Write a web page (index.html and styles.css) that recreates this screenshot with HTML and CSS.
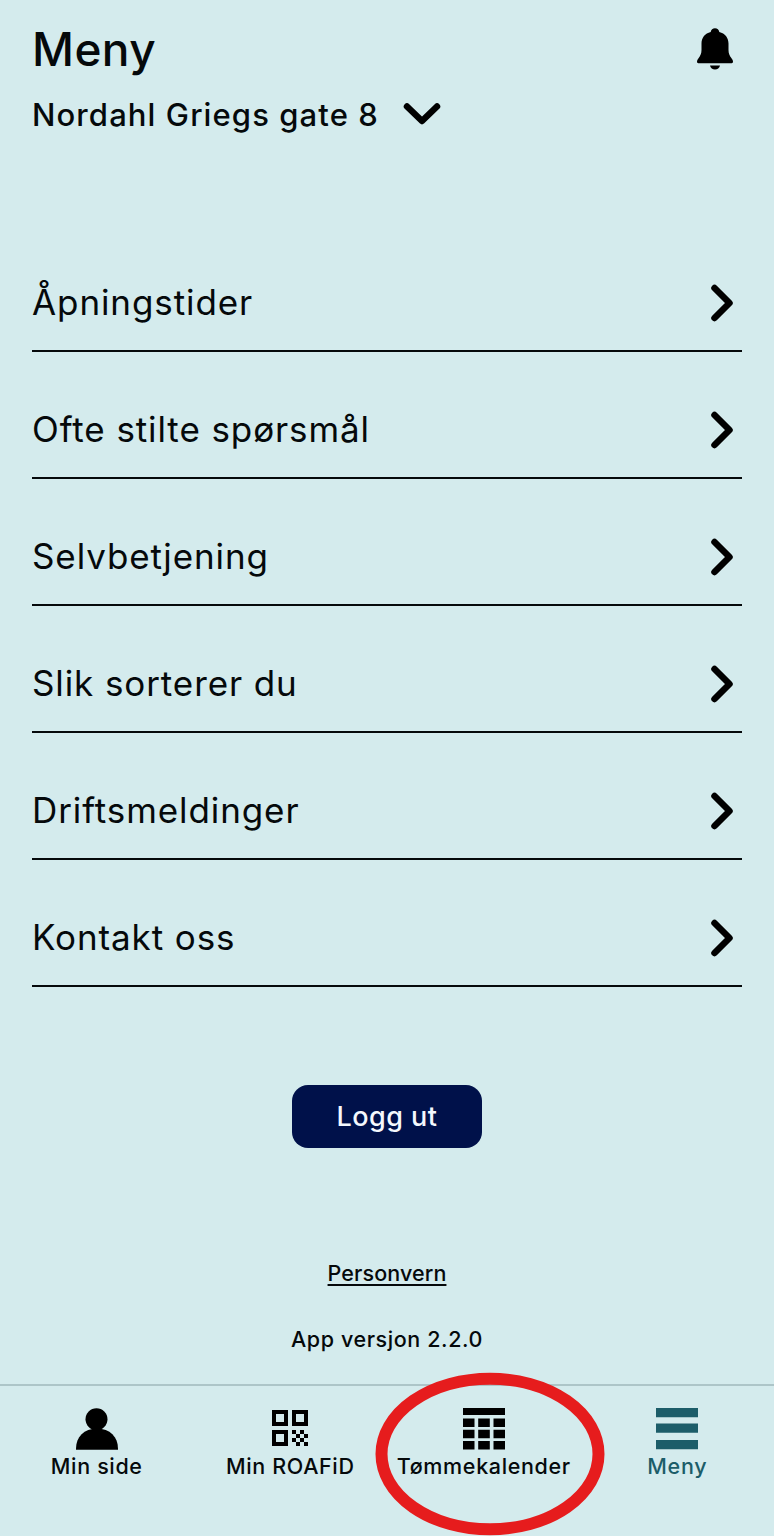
FILE: index.html
```html
<!DOCTYPE html>
<html lang="no">
<head>
  <meta charset="UTF-8" />
  <title>Meny</title>
  <meta name="viewport" content="width=device-width, initial-scale=1" />
  <link rel="stylesheet" href="styles.css">
</head>
<body>

  <div class="app">
    <!-- Topp -->
    <header class="header">
      <div class="header-row">
        <h1>Meny</h1>
        <svg class="bell" viewBox="0 0 36 42" width="36" height="42">
          <path d="M18 .3c2.300 0 4 1.500 4.300 3.600C28 5.200 31.500 9.500 31.500 15.500v6.500c0 3.500 1.200 6 3 8.300 1 1.300 1.500 2.300 1.500 3.500 0 .9-.5 1.400-1.300 1.400H1.300C.5 35.200 0 34.700 0 33.800c0-1.200.5-2.200 1.500-3.500 1.800-2.300 3-4.800 3-8.300v-6.500C4.500 9.500 8 5.200 13.700 3.900 14 1.800 15.700.3 18 .3z"/>
          <path d="M13 37.500h10c-.6 2.500-2.500 4-5 4s-4.400-1.500-5-4z"/>
        </svg>
      </div>
      <button class="address">
        <span>Nordahl Griegs gate 8</span>
        <svg viewBox="0 0 38 24" width="38" height="24"><path class="chevron" d="M4 4.500l15 14.500 15-14.500"/></svg>
      </button>
    </header>

    <!-- Menyvalg -->
    <main class="content">
      <ul class="menu">
        <li><span>Åpningstider</span><svg viewBox="0 0 24 38" width="24" height="38"><path class="chevron" d="M4.500 4l15 15-15 15"/></svg></li>
        <li><span>Ofte stilte spørsmål</span><svg viewBox="0 0 24 38" width="24" height="38"><path class="chevron" d="M4.500 4l15 15-15 15"/></svg></li>
        <li><span>Selvbetjening</span><svg viewBox="0 0 24 38" width="24" height="38"><path class="chevron" d="M4.500 4l15 15-15 15"/></svg></li>
        <li><span>Slik sorterer du</span><svg viewBox="0 0 24 38" width="24" height="38"><path class="chevron" d="M4.500 4l15 15-15 15"/></svg></li>
        <li><span>Driftsmeldinger</span><svg viewBox="0 0 24 38" width="24" height="38"><path class="chevron" d="M4.500 4l15 15-15 15"/></svg></li>
        <li><span>Kontakt oss</span><svg viewBox="0 0 24 38" width="24" height="38"><path class="chevron" d="M4.500 4l15 15-15 15"/></svg></li>
      </ul>

      <button class="logout">Logg ut</button>
      <a class="privacy" href="#">Personvern</a>
      <p class="version">App versjon 2.2.0</p>
    </main>

    <!-- Bunnmeny -->
    <nav class="tabbar">
      <a class="tab" href="#">
        <svg viewBox="0 0 42 42" width="42" height="42">
          <circle cx="20.500" cy="11.300" r="11"/>
          <path d="M0 41.700v-1C0 29 8 20.500 21 20.500S42 29 42 40.700v1z"/>
        </svg>
        <span>Min side</span>
      </a>
      <a class="tab" href="#">
        <svg viewBox="0 0 42 42" width="42" height="42">
          <path fill-rule="evenodd" d="M3 2h16v16H3zM7 6v8h8V6zM23 2h16v16H23zM27 6v8h8V6zM3 22h16v16H3zM7 26v8h8v-8z"/>
          <path d="M23 22h4v4h-4zM31 22h4v4h-4zM27 26h4v4h-4zM35 26h4v4h-4zM23 30h4v4h-4zM31 30h4v4h-4zM27 34h4v4h-4zM35 34h4v4h-4z"/>
        </svg>
        <span>Min ROAFiD</span>
      </a>
      <a class="tab" href="#">
        <svg viewBox="0 0 42 42" width="42" height="42">
          <path d="M0 0h42v7H0z"/>
          <path d="M0 10.500h11.500v8.500H0zM15.200 10.500h11.600v8.500H15.200zM30.500 10.500H42v8.500H30.500zM0 21.700h11.500v8.500H0zM15.200 21.700h11.600v8.500H15.200zM30.500 21.700H42v8.500H30.500zM0 33h11.500v8.500H0zM15.200 33h11.600v8.500H15.200zM30.500 33H42v8.500H30.500z"/>
        </svg>
        <span>Tømmekalender</span>
        <svg class="ring" viewBox="0 0 230 164" width="230" height="164"><ellipse cx="115" cy="82" rx="108.500" ry="75.300"/></svg>
      </a>
      <a class="tab active" href="#">
        <svg viewBox="0 0 42 42" width="42" height="42">
          <path d="M0 0h42v9.200H0zM0 15.500h42v9.200H0zM0 32h42v9.200H0z"/>
        </svg>
        <span>Meny</span>
      </a>
    </nav>
  </div>

</body>
</html>
```

FILE: styles.css
```css
* {
  box-sizing: border-box;
}
body {
  margin: 0;
  background: #d4ebed;
  color: #05090b;
  font-family: 'Inter', sans-serif;
}
h1, p, ul {
  margin: 0;
  padding: 0;
}
button {
  border: none;
  background: none;
  padding: 0;
  font: inherit;
  color: inherit;
}
svg {
  display: block;
  flex: none;
}

.app {
  display: flex;
  flex-direction: column;
  height: 1536px;
  overflow: hidden;
}

/* --- Header --- */
.header {
  height: 225px;
  padding: 19px 32px 0;
}
.header-row {
  display: flex;
  justify-content: space-between;
  padding-right: 9px;
}
h1 {
  font-size: 46px;
  line-height: 60px;
  font-weight: 500;
  letter-spacing: 0.4px;
}
.bell {
  margin-top: 9px;
}
.address {
  display: flex;
  align-items: center;
  gap: 24px;
  height: 44px;
  margin-top: 13px;
  font-size: 31px;
  font-weight: 500;
  letter-spacing: 1.1px;
}
.chevron {
  fill: none;
  stroke: #000;
  stroke-width: 6.5;
  stroke-linecap: round;
  stroke-linejoin: round;
}

/* --- Menu --- */
.content {
  flex: 1;
  display: flex;
  flex-direction: column;
  align-items: center;
}
.menu {
  align-self: stretch;
  margin: 0 32px;
  list-style: none;
}
.menu li {
  display: flex;
  justify-content: space-between;
  align-items: center;
  height: 127px;
  padding: 29px 8px 0 0;
  border-bottom: 2px solid #05090b;
  font-size: 35px;
  letter-spacing: 0.9px;
}
.menu svg {
  margin-top: 2px;
}
.logout {
  width: 190px;
  height: 63px;
  margin-top: 98px;
  border-radius: 16px;
  background: #00114a;
  color: #f4f8fd;
  font-size: 27px;
  font-weight: 500;
  letter-spacing: 0.45px;
}
.privacy {
  margin-top: 110px;
  color: inherit;
  font-size: 21.5px;
  font-weight: 500;
  line-height: 30px;
  letter-spacing: 0.1px;
  text-decoration: underline;
  text-decoration-thickness: 2px;
  text-underline-offset: 3px;
}
.version {
  margin-top: 36px;
  font-size: 21.5px;
  font-weight: 500;
  line-height: 30px;
  letter-spacing: 0.6px;
}

/* --- Tab bar --- */
.tabbar {
  display: grid;
  grid-template-columns: repeat(4, 1fr);
  height: 152px;
  border-top: 2px solid #adc5c8;
}
.tab {
  position: relative;
  display: flex;
  flex-direction: column;
  align-items: center;
  padding-top: 22px;
  color: inherit;
  fill: #000;
  font-size: 21.5px;
  font-weight: 500;
  line-height: 32px;
  letter-spacing: 0.65px;
  text-decoration: none;
  white-space: nowrap;
}
.tab.active {
  color: #1c5d69;
  fill: #1c5d69;
}
/* red marker around the calendar tab */
.ring {
  position: absolute;
  top: -14px;
  left: -12px;
  fill: none;
  stroke: #e61c1d;
  stroke-width: 12;
}
```
